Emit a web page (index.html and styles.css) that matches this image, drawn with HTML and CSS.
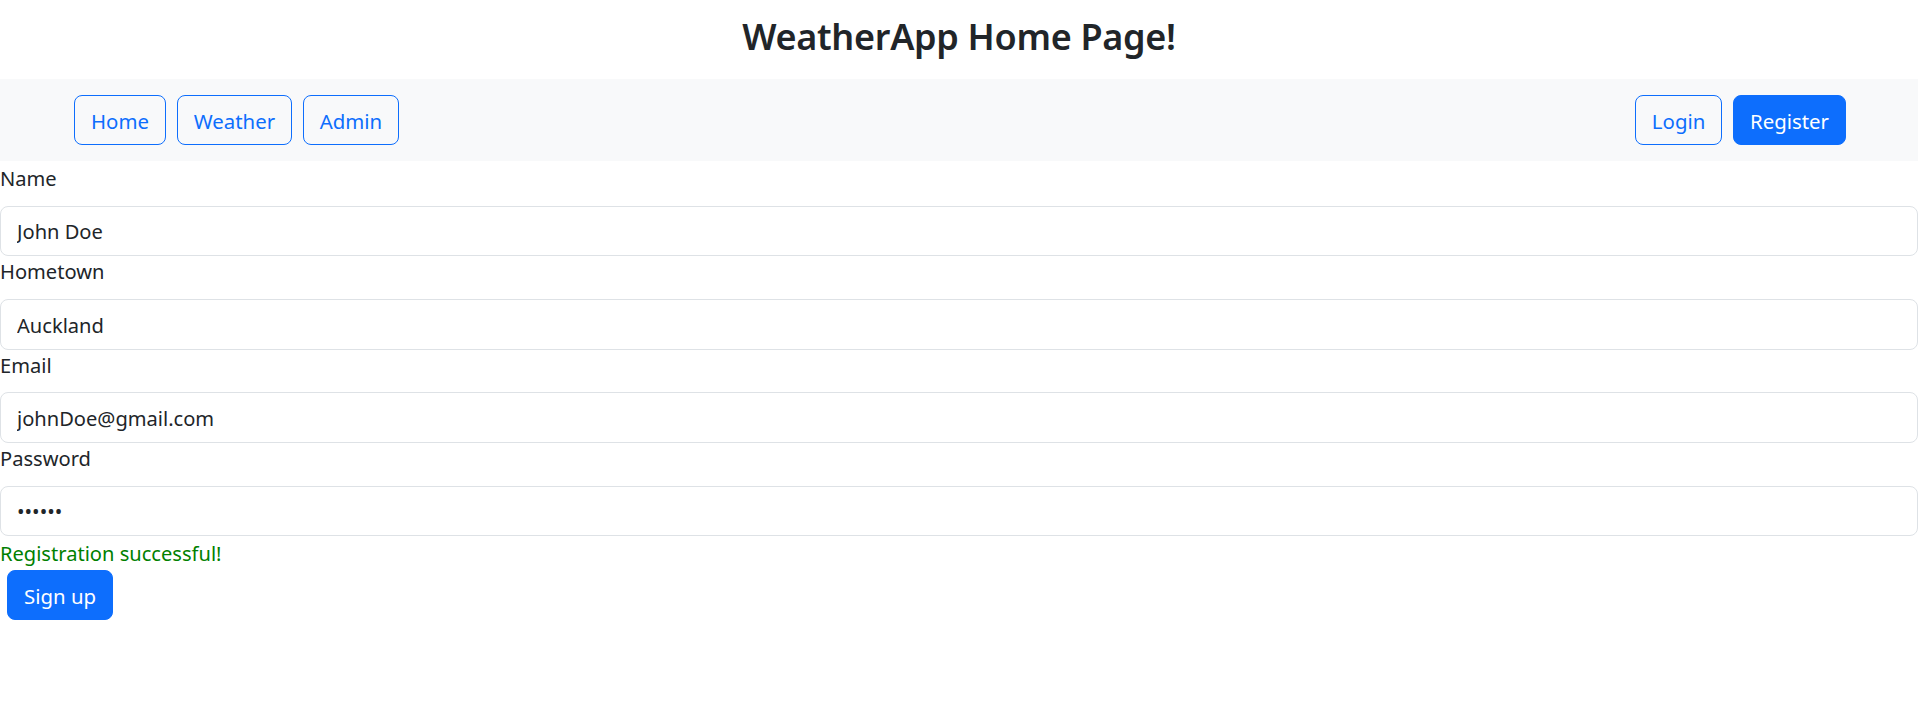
FILE: index.html
```html
<!DOCTYPE html>
<html lang="en">
<head>
<meta charset="utf-8">
<title>WeatherApp</title>
<link rel="stylesheet" href="styles.css">
</head>
<body>
<header class="page-header">
  <h1 class="page-title">WeatherApp Home Page!</h1>
</header>
<nav class="navbar">
  <div class="nav-group">
    <a class="btn btn-outline" href="#">Home</a>
    <a class="btn btn-outline" href="#">Weather</a>
    <a class="btn btn-outline" href="#">Admin</a>
  </div>
  <div class="nav-group">
    <a class="btn btn-outline" href="#">Login</a>
    <a class="btn btn-primary" href="#">Register</a>
  </div>
</nav>
<form class="register-form">
  <div class="field">
    <label class="form-label" for="name">Name</label>
    <input class="form-control" id="name" type="text" value="John Doe">
  </div>
  <div class="field">
    <label class="form-label" for="hometown">Hometown</label>
    <input class="form-control" id="hometown" type="text" value="Auckland">
  </div>
  <div class="field">
    <label class="form-label" for="email">Email</label>
    <input class="form-control" id="email" type="email" value="johnDoe@gmail.com">
  </div>
  <div class="field">
    <label class="form-label" for="password">Password</label>
    <input class="form-control" id="password" type="password" value="secret">
  </div>
  <p class="success">Registration successful!</p>
  <button class="btn btn-primary btn-submit" type="button">Sign up</button>
</form>
</body>
</html>
```
FILE: styles.css
```css
* {
  box-sizing: border-box;
}

body {
  margin: 0;
  font-family: "Noto Sans", "Open Sans", sans-serif;
  font-size: 20.1px;
  line-height: 32px;
  color: #212529;
  background: #fff;
}

.page-header {
  padding: 13px 0 18px;
  text-align: center;
}

.page-title {
  margin: 0;
  font-size: 36px;
  line-height: 48px;
  font-weight: 600;
  letter-spacing: -0.3px;
  color: #212529;
}

.navbar {
  display: flex;
  justify-content: space-between;
  align-items: center;
  padding: 16px 72px 16px 74px;
  background: #f8f9fa;
}

.nav-group {
  display: flex;
  gap: 10.67px;
}

.btn {
  display: inline-block;
  padding: 9px 16px 7px;
  font-family: inherit;
  font-size: 20.4px;
  line-height: 32px;
  border: 1.33px solid transparent;
  border-radius: 8px;
  text-decoration: none;
  cursor: pointer;
}

.btn-outline {
  color: #0d6efd;
  border-color: #0d6efd;
  background: transparent;
}

.btn-primary {
  color: #fff;
  background: #0d6efd;
  border-color: #0d6efd;
}

.register-form {
  padding-top: 2px;
}

.field {
  display: flex;
  flex-direction: column;
}

.form-label {
  display: block;
  margin-bottom: 10.67px;
}

.form-control {
  display: block;
  width: 100%;
  height: 50.67px;
  padding: 9px 16px 7px;
  font-family: inherit;
  font-size: 20.1px;
  line-height: 32px;
  color: #212529;
  background: #fff;
  border: 1.33px solid #dee2e6;
  border-radius: 8px;
  outline: none;
}

.success {
  margin: 0;
  padding-top: 1.5px;
  color: #008000;
}

.btn-submit {
  margin-left: 7px;
}
```
